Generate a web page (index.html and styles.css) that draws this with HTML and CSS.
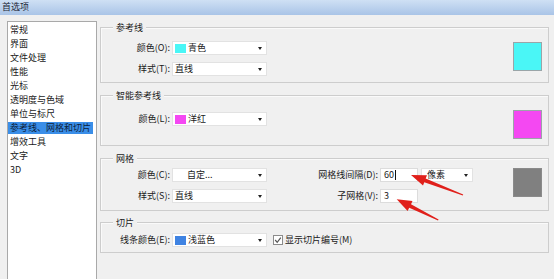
FILE: index.html
```html
<!DOCTYPE html>
<html lang="zh-CN">

<head>
    <meta charset="UTF-8">
    <meta name="viewport" content="width=device-width, initial-scale=1.0">
    <title>首选项</title>
    <link rel="stylesheet" href="styles.css">
</head>

<body>
    <div class="dialog">
        <div class="titlebar">首选项</div>

        <div class="main">
            <!-- 左侧分类列表 -->
            <ul class="nav">
                <li>常规</li>
                <li>界面</li>
                <li>文件处理</li>
                <li>性能</li>
                <li>光标</li>
                <li>透明度与色域</li>
                <li>单位与标尺</li>
                <li class="active">参考线、网格和切片</li>
                <li>增效工具</li>
                <li>文字</li>
                <li>3D</li>
            </ul>

            <div class="panel">
                <!-- 参考线 -->
                <div class="group g1">
                    <div class="group-title">参考线</div>
                    <div class="group-body">
                        <div class="fields">
                            <div class="row">
                                <span class="lbl">颜色(O):</span>
                                <div class="select"><i class="chip cyan"></i><span>青色</span></div>
                            </div>
                            <div class="row">
                                <span class="lbl">样式(T):</span>
                                <div class="select"><span>直线</span></div>
                            </div>
                        </div>
                        <div class="swatch cyan"></div>
                    </div>
                </div>

                <!-- 智能参考线 -->
                <div class="group g2">
                    <div class="group-title">智能参考线</div>
                    <div class="group-body">
                        <div class="fields">
                            <div class="row">
                                <span class="lbl">颜色(L):</span>
                                <div class="select"><i class="chip magenta"></i><span>洋红</span></div>
                            </div>
                        </div>
                        <div class="swatch magenta"></div>
                    </div>
                </div>

                <!-- 网格 -->
                <div class="group g3">
                    <div class="group-title">网格</div>
                    <div class="group-body">
                        <div class="fields">
                            <div class="row">
                                <span class="lbl">颜色(C):</span>
                                <div class="select"><span class="custom">自定...</span></div>
                                <span class="lbl2">网格线间隔(D):</span>
                                <div class="input">60<i class="caret"></i></div>
                                <div class="select small"><span>像素</span></div>
                            </div>
                            <div class="row">
                                <span class="lbl">样式(S):</span>
                                <div class="select"><span>直线</span></div>
                                <span class="lbl2">子网格(V):</span>
                                <div class="input">3</div>
                            </div>
                        </div>
                        <div class="swatch gray"></div>
                    </div>
                </div>

                <!-- 切片 -->
                <div class="group g4">
                    <div class="group-title">切片</div>
                    <div class="group-body">
                        <div class="fields">
                            <div class="row">
                                <span class="lbl">线条颜色(E):</span>
                                <div class="select"><i class="chip blue"></i><span>浅蓝色</span></div>
                                <label class="check">
                                    <svg class="box" width="10" height="10" viewBox="0 0 10 10">
                                        <rect x="0.5" y="0.5" width="9" height="9" fill="#fff" stroke="#8c8c8c" />
                                        <polyline points="2.2,5 4.2,7.3 7.8,2.6" fill="none" stroke="#555" stroke-width="1.2" />
                                    </svg>
                                    <span>显示切片编号(M)</span>
                                </label>
                            </div>
                        </div>
                    </div>
                </div>
            </div>
        </div>

        <!-- 红色标注箭头 -->
        <svg class="arrows" width="554" height="279" viewBox="0 0 554 279">
            <polygon fill="#e0201b"
                points="411,175 427,175.3 425.7,178.5 463.2,194.4 462.8,195.6 424.3,182.3 423,185.5" />
            <polygon fill="#e0201b"
                points="396.7,199.3 412.5,201.1 411,204.2 438.6,219.5 438,220.5 409.2,207.8 407.6,210.9" />
        </svg>
    </div>
</body>

</html>
```

FILE: styles.css
```css
* {
    margin: 0;
    padding: 0;
    box-sizing: border-box;
}

ul li {
    list-style: none;
}

body {
    width: 554px;
    height: 279px;
    overflow: hidden;
    background: #f0f0f0;
    font-family: "Noto Sans CJK SC", "Noto Sans", sans-serif;
    font-size: 9px;
    line-height: 12px;
    color: #1a1a1a;
}

.dialog {
    position: relative;
    height: 279px;
}

.titlebar {
    height: 15px;
    line-height: 14px;
    padding-left: 2px;
    background: linear-gradient(#cfe0f4, #a9c4e7);
    color: #1c2838;
}

.main {
    display: flex;
    align-items: flex-start;
}

/* 左侧列表 */
.nav {
    margin: 6px 0 0 7px;
    width: 90px;
    height: 270px;
    padding-top: 2px;
    background: #fff;
    border: 1px solid #a9a9a9;
}

.nav li {
    width: fit-content;
    height: 12px;
    line-height: 12px;
    margin-bottom: 2px;
    padding: 0 2px 0 2px;
    white-space: nowrap;
}

.nav li.active {
    background: #3a8ee8;
    color: #0e1f3a;
}

/* 右侧分组 */
.panel {
    margin: 12px 0 0 3px;
    width: 449px;
    display: flex;
    flex-direction: column;
    gap: 12px;
}

.group {
    border: 1px solid #cdcdcd;
    box-shadow: inset 1px 1px 0 #fafafa;
}

.group-title {
    margin: -6px 0 0 12px;
    padding: 0 3px;
    width: fit-content;
    height: 12px;
    background: #f0f0f0;
}

.group-body {
    display: flex;
    align-items: flex-start;
    padding: 7px 6px 6px 0;
}

.fields {
    flex: 1;
    display: flex;
    flex-direction: column;
    gap: 7px;
}

.row {
    display: flex;
    align-items: center;
    height: 14px;
}

.lbl {
    width: 69px;
    margin-right: 2px;
    text-align: right;
    white-space: nowrap;
}

.lbl2 {
    width: 111px;
    margin-right: 2px;
    text-align: right;
    white-space: nowrap;
}

.select {
    width: 95px;
    height: 14px;
    display: flex;
    align-items: center;
    padding: 0 4px 0 2px;
    background: #fff;
    border: 1px solid #e2e2e2;
}

.select::after {
    content: "";
    margin-left: auto;
    border-left: 2.5px solid transparent;
    border-right: 2.5px solid transparent;
    border-top: 3px solid #222;
}

.select.small {
    width: 52px;
    margin-left: 3px;
    padding-left: 5px;
}

.select .custom {
    padding-left: 12px;
}

.chip {
    width: 11px;
    height: 9px;
    margin-right: 2px;
}

.input {
    width: 38px;
    height: 14px;
    display: flex;
    align-items: center;
    padding-left: 3px;
    background: #fff;
    border: 1px solid #dcdcdc;
}

.caret {
    width: 1px;
    height: 10px;
    margin-left: 1px;
    background: #111;
}

.check {
    display: flex;
    align-items: center;
    margin-left: 6px;
}

.check .box {
    margin-right: 2px;
}

.swatch {
    width: 29px;
    height: 29px;
    border: 1px solid #9aa5a8;
}

.cyan {
    background: #4af6f6;
}

.magenta {
    background: #f448f2;
}

.gray {
    background: #808080;
    border-color: #8a8a8a;
}

.blue {
    background: #3f83e2;
}

/* 每组的间距微调 */
.g1 .swatch {
    margin-top: 1px;
}

.g2 .group-body {
    padding-top: 8px;
}

.g2 .fields {
    margin-top: 2px;
}

.g3 .group-body {
    padding: 3px 6px 7px 0;
}

.g4 {
    margin-top: -1px;
}

.g4 .group-body {
    padding: 4px 6px 5px 0;
}

.arrows {
    position: absolute;
    left: 0;
    top: 0;
    pointer-events: none;
}
```
